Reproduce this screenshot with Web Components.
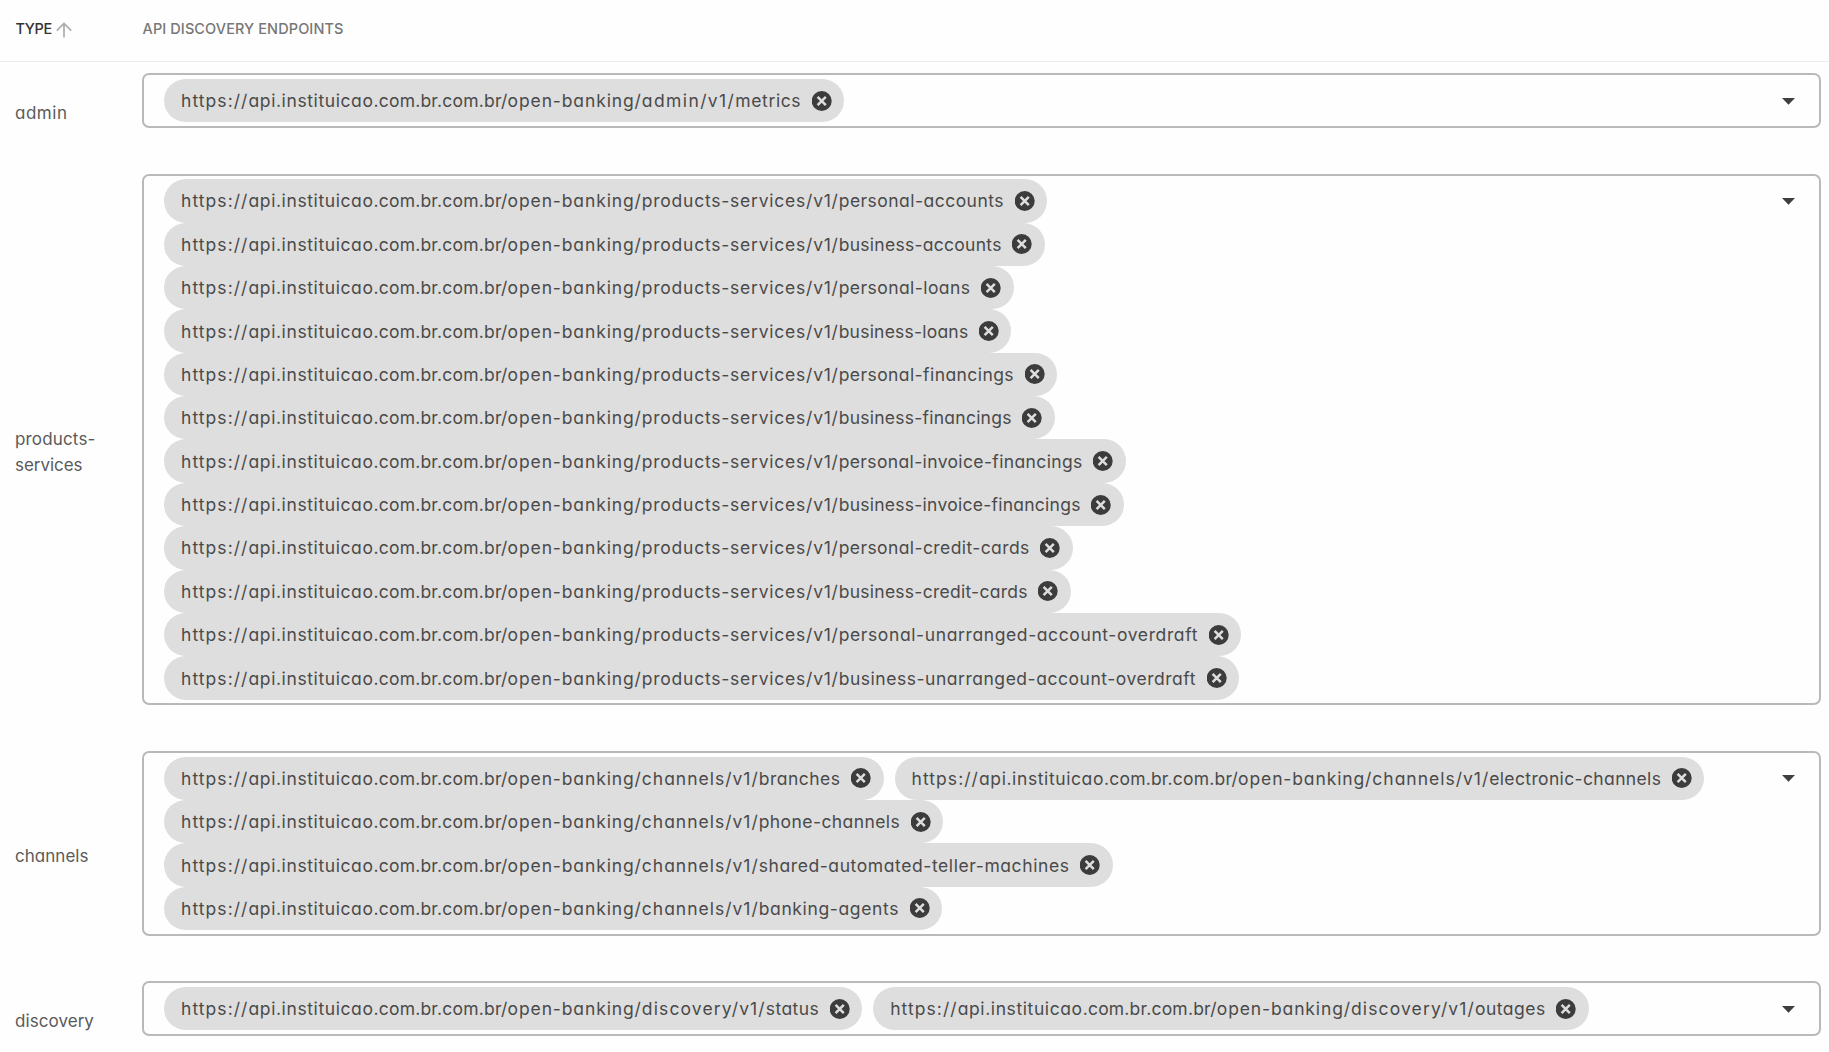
<!DOCTYPE html>
<html lang="en">
<head>
<meta charset="utf-8">
<title>API Discovery Endpoints</title>
<style>
html, body { margin: 0; height: 100%; overflow: hidden; background: #fefefe; }
body { font-family: Inter, "Open Sans", sans-serif; font-feature-settings: "cv11" 1, "calt" 0; color: #4c4c4c; }
</style>
</head>
<body>
<endpoint-table></endpoint-table>
<script>
/* Text tracked to an exact measure. The text may be cut in parts by "|",
   with one stop (the right edge of the part, in px) for each. */
class FitText extends HTMLElement {
  connectedCallback() {
    const root = this.attachShadow({ mode: 'open' });
    root.innerHTML = `<style>
      :host { display: block; white-space: nowrap; flex: none; }
    </style>`;
    const parts = this.getAttribute('text').split('|');
    const stops = this.getAttribute('stops').split(' ').map(Number);
    const spans = parts.map(text => {
      const span = document.createElement('span');
      span.textContent = text;
      root.append(span);
      return span;
    });
    const widths = spans.map(s => s.getBoundingClientRect().width);
    spans.forEach((s, i) => {
      const want = stops[i] - (i ? stops[i - 1] : 0);
      s.style.letterSpacing = (want - widths[i]) / parts[i].length + 'px';
    });
    this.style.width = stops[stops.length - 1] + 'px';
  }
}
customElements.define('fit-text', FitText);

class EndpointChip extends HTMLElement {
  connectedCallback() {
    this.attachShadow({ mode: 'open' }).innerHTML = `<style>
      :host { display: flex; align-items: center; box-sizing: border-box; height: 43.4px; padding: 0 12.5px 0 17px;
        gap: 10.5px; border-radius: 22px; background: #dedede; color: #4a4a4a; font-size: 17.5px; line-height: 24px; }
      fit-text { padding-top: 1px; }
      svg { display: block; width: 20px; height: 20px; flex: none; }
    </style>
    <fit-text text="${this.getAttribute('url')}" stops="${this.getAttribute('stops')}"></fit-text>
    <svg viewBox="0 0 20 20"><circle cx="9.7" cy="10" r="10" fill="#3c3c3c"/><path d="M5.6 5.9l8.2 8.2M13.8 5.9l-8.2 8.2" stroke="#dedede" stroke-width="2.5" fill="none"/></svg>`;
  }
}
customElements.define('endpoint-chip', EndpointChip);

class EndpointSelect extends HTMLElement {
  connectedCallback() {
    this.attachShadow({ mode: 'open' }).innerHTML = `<style>
      :host { display: flex; align-items: flex-start; box-sizing: border-box; border: 2px solid #b9b9b9; border-radius: 7px;
        padding: 3.6px 24.5px 3.4px 20px; background: #fefefe; }
      .chips { flex: 1; display: flex; flex-wrap: wrap; column-gap: 11px; }
      svg { display: block; width: 13px; height: 7px; margin: 18.6px 0 0; flex: none; overflow: visible; }
    </style>
    <div class="chips"><slot></slot></div>
    <svg viewBox="0 0 13 7"><path d="M0 0h13L6.5 6.7z" fill="#3f3f3f"/></svg>`;
  }
}
customElements.define('endpoint-select', EndpointSelect);

class EndpointRow extends HTMLElement {
  connectedCallback() {
    this.attachShadow({ mode: 'open' }).innerHTML = `<style>
      :host { display: grid; grid-template-columns: 142px 1fr; align-items: center; padding: 11.4px 8px 34.4px 0; }
      .label { padding: 27px 0 0 15px; font-size: 17px; line-height: 25.7px; color: #5a5a5a; }
    </style>
    <div class="label"><slot name="label"></slot></div>
    <endpoint-select><slot></slot></endpoint-select>`;
  }
}
customElements.define('endpoint-row', EndpointRow);

class EndpointHeader extends HTMLElement {
  connectedCallback() {
    this.attachShadow({ mode: 'open' }).innerHTML = `<style>
      :host { display: grid; grid-template-columns: 142px 1fr; align-items: center; box-sizing: border-box; height: 62px;
        padding-bottom: 4px; border-bottom: 1px solid #ececec; font-size: 14.5px; line-height: 20px; font-weight: 500; color: #777; }
      .type { display: flex; align-items: center; gap: 4px; padding-left: 15.5px; color: #333; }
      .title { padding-left: 0.5px; }
      svg { display: block; width: 16px; height: 16px; margin-top: 2px; }
    </style>
    <div class="type"><fit-text text="TYPE" stops="36.5"></fit-text>
      <svg viewBox="0 0 16 16"><path d="M8 15.5V1.5M.8 8.7L8 1.5l7.2 7.2" fill="none" stroke="#adadad" stroke-width="1.7"/></svg></div>
    <div class="title"><fit-text text="API DISCOVERY ENDPOINTS" stops="201"></fit-text></div>`;
  }
}
customElements.define('endpoint-header', EndpointHeader);

const BASE = 'https://|api.instituicao|.com.br.com.br/|open-banking/|';
const BASE_STOPS = [67.5, 192.5, 326.6, 460.8];

const GROUPS = [
  { label: [['admin', 52.5]], api: 'admin', stop: 554.3, items: [['metrics', 620.2]] },
  { label: [['products-', 80.5], ['services', 67.5]], api: 'products-services', stop: 657.7, items: [
    ['personal-accounts', 823],
    ['business-accounts', 820.7],
    ['personal-loans', 789.5],
    ['business-loans', 787.4],
    ['personal-financings', 833],
    ['business-financings', 830.7],
    ['personal-invoice-financings', 901.7],
    ['business-invoice-financings', 899.7],
    ['personal-credit-cards', 848.7],
    ['business-credit-cards', 846.7],
    ['personal-unarranged-account-overdraft', 1017],
    ['business-unarranged-account-overdraft', 1015]] },
  { label: [['channels', 73.5]], api: 'channels', stop: 577.7, items: [
    ['branches', 659.5],
    ['electronic-channels', 749.8],
    ['phone-channels', 719.2],
    ['shared-automated-teller-machines', 888.5],
    ['banking-agents', 718]] },
  { label: [['discovery', 79]], api: 'discovery', stop: 584.8, items: [
    ['status', 638.2],
    ['outages', 655.5]] }
];

class EndpointTable extends HTMLElement {
  connectedCallback() {
    this.attachShadow({ mode: 'open' }).innerHTML = `<style>
      :host { display: flex; flex-direction: column; }
    </style>
    <endpoint-header></endpoint-header>` + GROUPS.map(g => `<endpoint-row>
      <div slot="label">${g.label.map(([t, w]) => `<fit-text text="${t}" stops="${w}"></fit-text>`).join('')}</div>
      ${g.items.map(([name, end]) => `<endpoint-chip url="${BASE}${g.api}/v1/|${name}"
        stops="${[...BASE_STOPS, g.stop, end].join(' ')}"></endpoint-chip>`).join('')}
    </endpoint-row>`).join('');
  }
}
customElements.define('endpoint-table', EndpointTable);
</script>
</body>
</html>
